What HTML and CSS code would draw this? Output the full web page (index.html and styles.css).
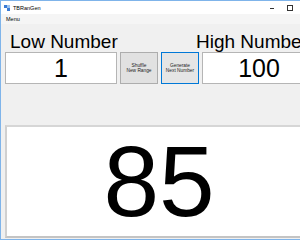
FILE: index.html
```html
<!DOCTYPE html>
<html>
<head>
<meta charset="utf-8">
<title>TBRanGen</title>
<link rel="stylesheet" href="styles.css">
</head>
<body>
<div class="window">
  <div class="titlebar">
    <div class="app">
      <svg class="appicon" width="6" height="6" viewBox="0 0 6 6"><rect x="0" y="0" width="3" height="3" fill="#3a7bd5"/><rect x="3" y="3" width="3" height="3" fill="#3a7bd5"/><rect x="3" y="0" width="3" height="3" fill="#9cc3ee"/></svg>
      <span class="title">TBRanGen</span>
    </div>
    <div class="controls">
      <span class="min"></span>
      <span class="max"></span>
    </div>
  </div>
  <div class="menubar"><span class="menu">Menu</span></div>
  <div class="form">
    <div class="labels">
      <span class="label low">Low Number</span>
      <span class="label high">High Number</span>
    </div>
    <div class="inputs">
      <div class="textbox">1</div>
      <div class="btn">Shuffle<br>New Range</div>
      <div class="btn focus">Generate<br>Next Number</div>
      <div class="textbox wide">100</div>
    </div>
    <div class="output">85</div>
  </div>
</div>
</body>
</html>
```
FILE: styles.css
```css
html, body {
  margin: 0;
  padding: 0;
  width: 300px;
  height: 240px;
  overflow: hidden;
  background: #f0f0f0;
  font-family: "Liberation Sans", Arial, sans-serif;
}
.window {
  width: 340px;
  height: 238px;
  border-top: 1px solid #7fb4ea;
  border-left: 1px solid #7fb4ea;
  border-bottom: 1px solid #7fb4ea;
  display: flex;
  flex-direction: column;
  background: #f0f0f0;
}
.titlebar {
  height: 13px;
  background: #ffffff;
  display: flex;
  align-items: center;
  justify-content: space-between;
}
.app {
  display: flex;
  align-items: center;
  padding-left: 3px;
  gap: 3px;
}
.title {
  font-size: 5.5px;
  color: #000;
}
.controls {
  display: flex;
  align-items: center;
  gap: 13px;
  padding-right: 48px;
}
.min {
  width: 4px;
  height: 1px;
  background: #333;
  margin-top: 1px;
}
.max {
  width: 4px;
  height: 4px;
  border: 1px solid #333;
}
.menubar {
  height: 10px;
  background: #f5f5f5;
  border-bottom: 1px solid #f0f0f0;
  display: flex;
  align-items: center;
  padding-left: 5px;
}
.menu {
  font-size: 5.5px;
  color: #000;
}
.form {
  flex: 1;
  display: flex;
  flex-direction: column;
  padding-left: 4px;
}
.labels {
  height: 26px;
  display: flex;
  align-items: flex-end;
}
.label {
  font-size: 19px;
  line-height: 19px;
  color: #000;
  white-space: nowrap;
}
.low {
  margin-left: 5px;
  width: 186px;
}
.inputs {
  display: flex;
  gap: 3px;
  height: 32px;
  margin-top: 1px;
}
.textbox {
  width: 110px;
  background: #fff;
  border: 1px solid #b5b5b5;
  display: flex;
  align-items: center;
  justify-content: center;
  font-size: 25px;
  color: #000;
}
.textbox.wide {
  width: 112px;
}
.btn {
  width: 36px;
  background: #e1e1e1;
  border: 1px solid #adadad;
  display: flex;
  align-items: center;
  justify-content: center;
  text-align: center;
  font-size: 4.8px;
  line-height: 5.5px;
  color: #222;
}
.btn.focus {
  border-color: #0078d7;
  background: #e5e5e5;
}
.output {
  margin-top: 41px;
  height: 109px;
  width: 304px;
  background: #fff;
  border: 2px solid #c4c4c4;
  border-top-color: #d6d6d6;
  border-left-color: #d0d0d0;
  display: flex;
  align-items: center;
  justify-content: center;
  font-size: 100px;
  color: #000;
}
```
